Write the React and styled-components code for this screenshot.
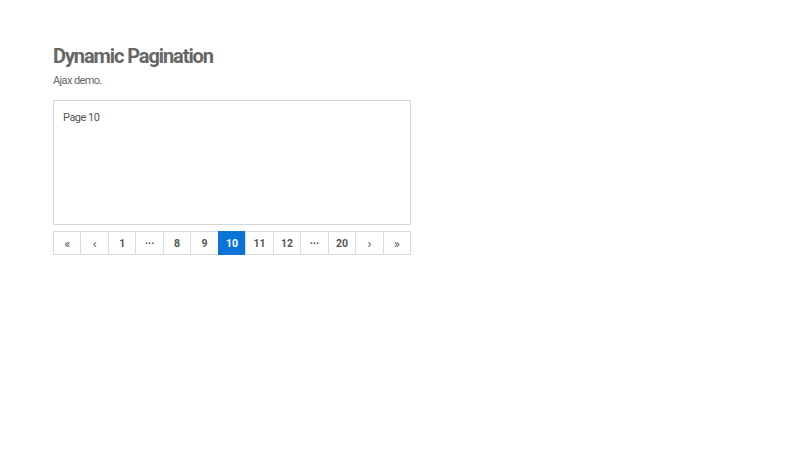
import React from 'react';
import styled, { createGlobalStyle } from 'styled-components';

const GlobalStyle = createGlobalStyle`
  body {
    margin: 0;
    background: #fff;
    font-family: Roboto, "Liberation Sans", sans-serif;
    color: #666;
  }
`

const Page = styled.div`
  padding: 43px 53px;
  width: 358px;
`
const Title = styled.h1`
  margin: 0;
  font-size: 20px;
  font-weight: 700;
  line-height: 26px;
  letter-spacing: -1.1px;
  color: #666;
`
const Lead = styled.p`
  margin: 5px 0 0;
  font-size: 11px;
  line-height: 14px;
  letter-spacing: -0.6px;
  color: #666;
`
const Content = styled.div`
  margin-top: 12px;
  height: 103px;
  padding: 10px 9px;
  border: 1px solid #d6d6d6;
  font-size: 11px;
  line-height: 13px;
  letter-spacing: -0.5px;
  color: #555;
`
const Pager = styled.ul`
  display: flex;
  margin: 6px 0 0;
  padding: 0;
  list-style: none;
`
const PageItem = styled.li`
  flex: 1;
  height: 22px;
  display: flex;
  align-items: center;
  justify-content: center;
  border: 1px solid ${props => props.active ? '#0a74d6' : '#dcdcdc'};
  margin-left: -1px;
  background: ${props => props.active ? '#0a74d6' : '#fff'};
  color: ${props => props.active ? '#fff' : '#555'};
  font-size: ${props => props.arrow ? '13px' : '10.5px'};
  font-weight: ${props => props.arrow ? 400 : 700};
  cursor: pointer;
  &:first-child {
    margin-left: 0;
  }
`

const pages = [
  { label: '«', arrow: true },
  { label: '‹', arrow: true },
  { label: '1' },
  { label: '···' },
  { label: '8' },
  { label: '9' },
  { label: '10', active: true },
  { label: '11' },
  { label: '12' },
  { label: '···' },
  { label: '20' },
  { label: '›', arrow: true },
  { label: '»', arrow: true },
]

export default function App() {
  return (
    <Page>
      <GlobalStyle />
      <Title>Dynamic Pagination</Title>
      <Lead>Ajax demo.</Lead>
      <Content>Page 10</Content>
      <Pager>
        {pages.map((p, index) => (
          <PageItem key={index} active={p.active} arrow={p.arrow}>{p.label}</PageItem>
        ))}
      </Pager>
    </Page>
  );
}
